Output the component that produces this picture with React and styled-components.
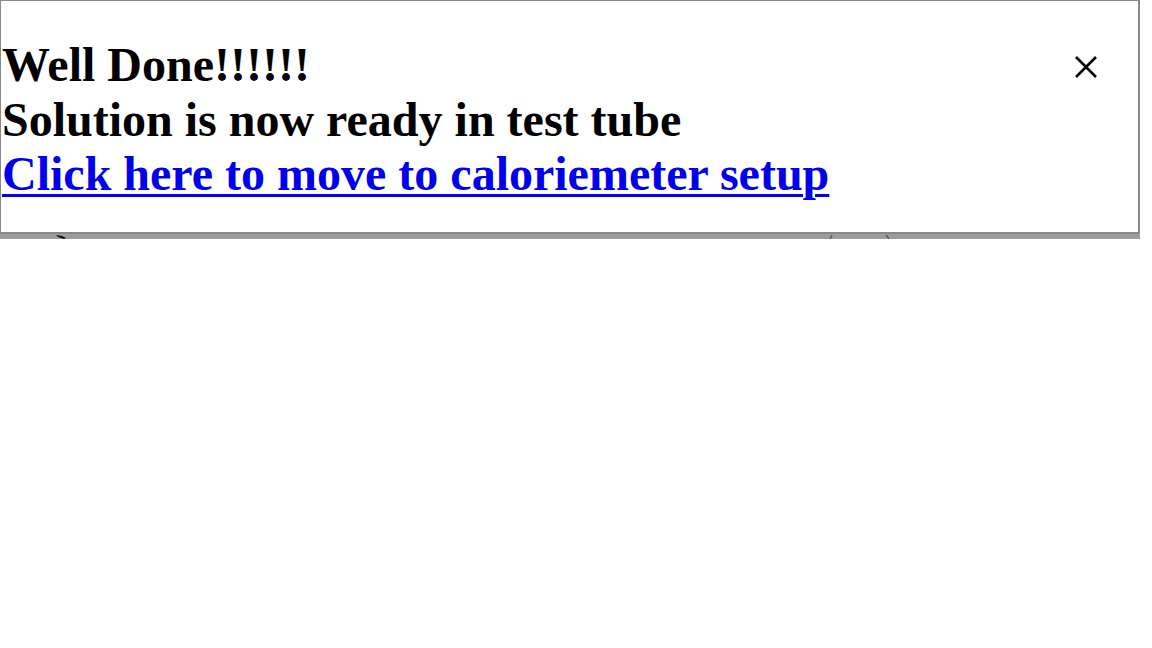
import React from "react";
import styled, { createGlobalStyle } from "styled-components";

const Global = createGlobalStyle`
  html, body { margin: 0; padding: 0; background: #ffffff; }
  body { font-family: "Liberation Serif", "Times New Roman", serif; }
`;

const Stage = styled.div`
  position: relative;
  width: 1152px;
  height: 648px;
  background: #ffffff;
  overflow: hidden;
`;

const Backdrop = styled.svg`
  position: absolute;
  left: 0;
  top: 230px;
  z-index: 2;
  pointer-events: none;
`;

const Dialog = styled.div`
  position: relative;
  z-index: 1;
  width: 1140px;
  height: 234px;
  box-sizing: border-box;
  background: #ffffff;
  border: 1px solid #888888;
  border-right-width: 2px;
  border-bottom-width: 2px;
  box-shadow: 0 5px 0 #9c9c9c;
  display: flex;
  align-items: flex-start;
  padding: 37px 0 0 1px;
`;

const Message = styled.div`
  flex: 1;
  font-weight: bold;
  font-size: 48px;
  line-height: 54.5px;
  color: #000000;
`;

const Line = styled.div``;

const Link = styled.a`
  color: #0000ee;
  text-decoration: underline;
  text-decoration-thickness: 3px;
  text-underline-offset: 4px;
  cursor: pointer;
`;

const Close = styled.button`
  position: absolute;
  top: 53px;
  right: 39px;
  width: 26px;
  height: 26px;
  padding: 0;
  border: none;
  background: transparent;
  display: flex;
  align-items: center;
  justify-content: center;
  cursor: pointer;
`;

export default function App() {
  return (
    <Stage>
      <Global />
      <Dialog>
        <Message>
          <Line>Well Done!!!!!!</Line>
          <Line>Solution is now ready in test tube</Line>
          <Line>
            <Link>Click here to move to caloriemeter setup</Link>
          </Line>
        </Message>
        <Close aria-label="close">
          <svg width="24" height="24" viewBox="0 0 24 24">
            <path d="M2 2 L22 22 M22 2 L2 22" stroke="#000" strokeWidth="2.6" strokeLinecap="butt" />
          </svg>
        </Close>
      </Dialog>
      <Backdrop width="1152" height="12" viewBox="0 0 1152 12">
        <path d="M56 5 L62 6 L66 8 L64 9 L58 7 Z" fill="#111" />
        <path d="M832 5 Q831 7 830 9" stroke="#555" strokeWidth="1.2" fill="none" />
        <path d="M886 5 Q888 7 889 9" stroke="#555" strokeWidth="1.2" fill="none" />
      </Backdrop>
    </Stage>
  );
}
